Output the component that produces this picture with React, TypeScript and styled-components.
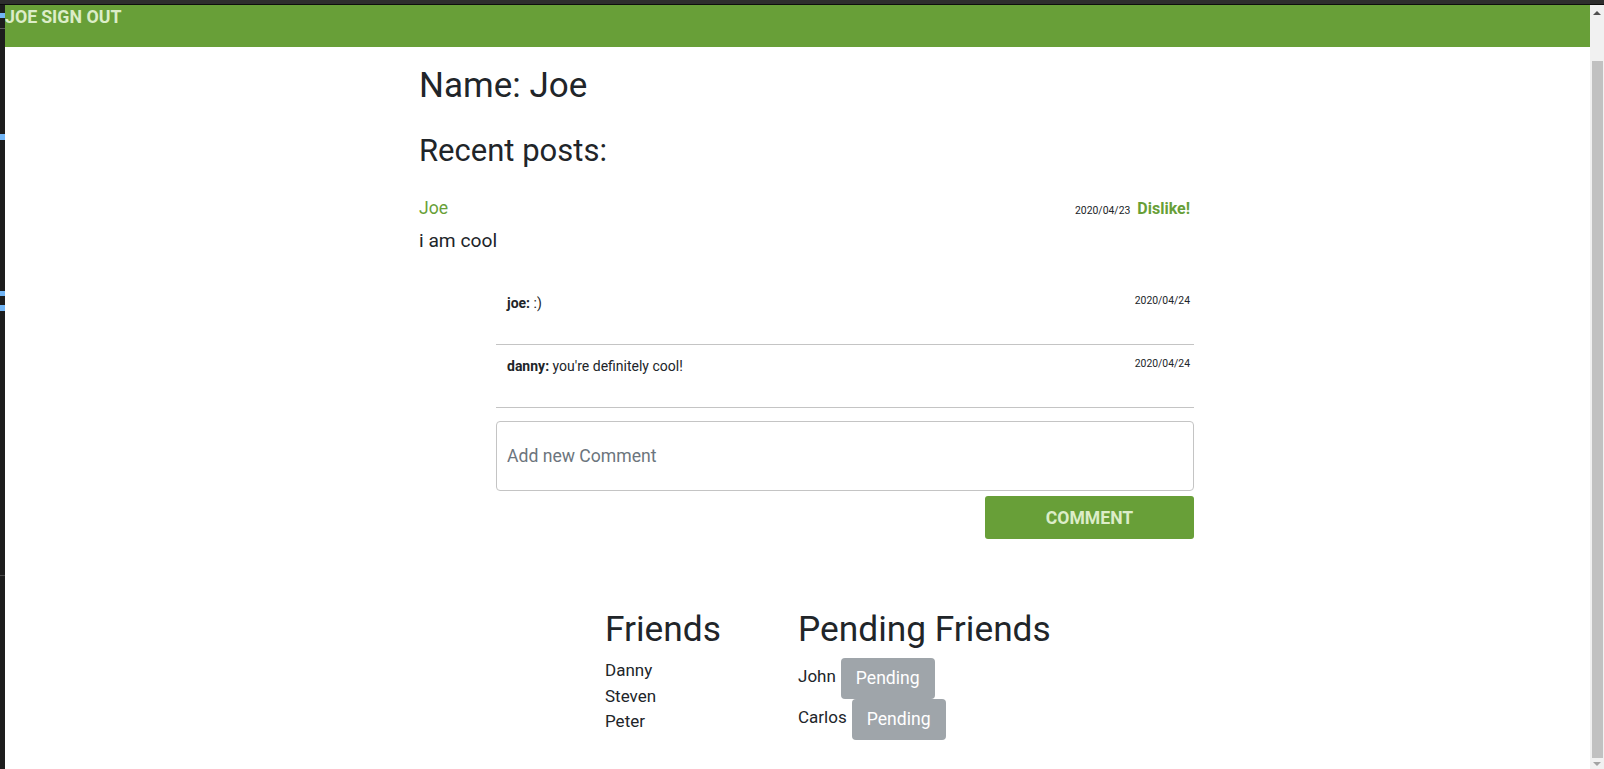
import React from "react";
import styled, { createGlobalStyle } from "styled-components";

const GlobalStyle = createGlobalStyle`
  html, body { margin: 0; padding: 0; height: 100%; overflow: hidden; }
  body { font-family: Roboto, "Noto Sans", Arial, sans-serif; background: #1d1d1d; color: #212529; }
  * { box-sizing: border-box; }
`;

const Frame = styled.div`
  height: 100vh;
  display: flex;
  flex-direction: column;
  overflow: hidden;
`;

const TopStrip = styled.div`
  height: 5px;
  flex-shrink: 0;
  background: #2e2e2e;
  border-bottom: 1px solid #0e0e0e;
`;

const Workspace = styled.div`
  flex: 1;
  display: flex;
  min-height: 0;
`;

const Rail = styled.div`
  width: 5px;
  flex-shrink: 0;
  background: #1d1d1d;
  svg { display: block; }
`;

const Page = styled.div`
  flex: 1;
  min-width: 0;
  background: #ffffff;
  display: flex;
  flex-direction: column;
  overflow: hidden;
`;

const Header = styled.header`
  height: 42px;
  flex-shrink: 0;
  background: #689f38;
  padding-top: 1px;
`;

const NavLink = styled.a`
  color: #dcedc8;
  font-weight: 700;
  font-size: 17.8px;
  line-height: 1.2;
  text-transform: uppercase;
  text-decoration: none;
  cursor: pointer;
`;

const Main = styled.main`
  padding: 17px 0 0 18px;
`;

const Container = styled.div`
  width: 775px;
  margin: 0 auto;
`;

const Title = styled.h1`
  margin: 0;
  font-size: 35px;
  font-weight: 400;
  line-height: 1.25;
`;

const SectionTitle = styled.h2`
  margin: 24px 0 0;
  font-size: 31px;
  font-weight: 400;
  line-height: 1.2;
`;

const Post = styled.article`
  margin-top: 26px;
`;

const PostHead = styled.div`
  display: flex;
  justify-content: space-between;
  align-items: baseline;
`;

const Author = styled.span`
  color: #689f38;
  font-size: 17.6px;
  line-height: 1.5;
`;

const Meta = styled.div`
  display: flex;
  align-items: baseline;
  gap: 7px;
  padding-right: 4px;
`;

const DateText = styled.span`
  font-size: 10.4px;
  line-height: 1.5;
  color: #212529;
`;

const DislikeButton = styled.button`
  background: none;
  border: 0;
  padding: 0;
  font-family: Roboto, Arial, sans-serif;
  font-weight: 700;
  font-size: 16px;
  color: #689f38;
  cursor: pointer;
`;

const PostBody = styled.p`
  margin: 6px 0 0;
  font-size: 19.2px;
  line-height: 1.5;
`;

const Comments = styled.div`
  margin: 26px 0 0 77px;
`;

const CommentCard = styled.div`
  height: 63px;
  padding: 11px 4px 0 11px;
  border-bottom: 1px solid #c4c4c4;
  display: flex;
  justify-content: space-between;
  align-items: flex-start;
  font-size: 14px;
  line-height: 1.5;
`;

const CommentText = styled.span`
  b { font-weight: 700; }
`;

const CommentInput = styled.input`
  display: block;
  margin-top: 13px;
  width: 100%;
  height: 70px;
  border: 1px solid #c4c4c4;
  border-radius: 4px;
  padding: 0 10px;
  font-family: Roboto, Arial, sans-serif;
  font-size: 17.6px;
  color: #495057;
  outline: none;
  &::placeholder { color: #6c757d; }
`;

const CommentButton = styled.button`
  display: block;
  margin: 5px 0 0 auto;
  width: 209px;
  height: 43px;
  background: #689f38;
  color: #dcedc8;
  border: 0;
  border-radius: 3px;
  font-family: Roboto, Arial, sans-serif;
  font-weight: 700;
  font-size: 17.6px;
  text-transform: uppercase;
  cursor: pointer;
`;

const FriendsGrid = styled.section`
  margin-top: 69px;
  display: grid;
  grid-template-columns: 193px auto;
  padding-left: 186px;
`;

const Column = styled.div`
  display: flex;
  flex-direction: column;
`;

const ColumnTitle = styled.h3`
  margin: 0 0 8px;
  font-size: 35.3px;
  font-weight: 400;
  line-height: 1.2;
`;

const FriendName = styled.div`
  font-size: 17px;
  line-height: 1.5;
`;

const PendingRow = styled.div`
  display: flex;
  align-items: flex-start;
  gap: 5px;
  font-size: 17px;
  line-height: 1.5;
`;

const PendingName = styled.span`
  padding-top: 6px;
`;

const PendingButton = styled.button`
  background: #9fa5aa;
  color: #ffffff;
  border: 0;
  border-radius: 4px;
  padding: 7px 15px;
  font-family: Roboto, Arial, sans-serif;
  font-size: 17.6px;
  line-height: 27px;
`;

const Scrollbar = styled.div`
  width: 14px;
  flex-shrink: 0;
  background: #f1f1f1;
  display: flex;
  flex-direction: column;
`;

const ArrowCell = styled.div<{ $h: number; $top: number }>`
  height: ${(p) => p.$h}px;
  padding-top: ${(p) => p.$top}px;
  display: flex;
  justify-content: center;
  align-items: flex-start;
  svg { display: block; }
`;

const Track = styled.div`
  flex: 1;
  display: flex;
  flex-direction: column;
  padding: 42px 1px 0 2px;
`;

const Thumb = styled.div`
  flex: 1;
  background: #c1c1c1;
`;

const comments = [
  { author: "joe", text: ":)", date: "2020/04/24" },
  { author: "danny", text: "you're definitely cool!", date: "2020/04/24" },
];

const friends = ["Danny", "Steven", "Peter"];
const pending = ["John", "Carlos"];

export default function App() {
  return (
    <>
      <GlobalStyle />
      <Frame>
        <TopStrip />
        <Workspace>
          <Rail>
            <svg width="5" height="764" viewBox="0 0 5 764">
              <rect x="0" y="8" width="5" height="5" fill="#72b5f5" />
              <rect x="0" y="23" width="5" height="1" fill="#5a5a5a" />
              <rect x="0" y="129" width="5" height="6" fill="#72b5f5" />
              <rect x="0" y="286" width="5" height="5" fill="#72b5f5" />
              <rect x="0" y="300" width="5" height="6" fill="#72b5f5" />
              <rect x="0" y="570" width="5" height="1" fill="#4a4a4a" />
            </svg>
          </Rail>
          <Page>
            <Header>
              <NavLink>Joe</NavLink> <NavLink>Sign Out</NavLink>
            </Header>
            <Main>
              <Container>
                <Title>Name: Joe</Title>
                <SectionTitle>Recent posts:</SectionTitle>
                <Post>
                  <PostHead>
                    <Author>Joe</Author>
                    <Meta>
                      <DateText>2020/04/23</DateText>
                      <DislikeButton>Dislike!</DislikeButton>
                    </Meta>
                  </PostHead>
                  <PostBody>i am cool</PostBody>
                  <Comments>
                    {comments.map((c) => (
                      <CommentCard key={c.author}>
                        <CommentText>
                          <b>{c.author}:</b> {c.text}
                        </CommentText>
                        <DateText>{c.date}</DateText>
                      </CommentCard>
                    ))}
                    <CommentInput placeholder="Add new Comment" />
                    <CommentButton>Comment</CommentButton>
                  </Comments>
                </Post>
                <FriendsGrid>
                  <Column>
                    <ColumnTitle>Friends</ColumnTitle>
                    {friends.map((f) => (
                      <FriendName key={f}>{f}</FriendName>
                    ))}
                  </Column>
                  <Column>
                    <ColumnTitle>Pending Friends</ColumnTitle>
                    {pending.map((p) => (
                      <PendingRow key={p}>
                        <PendingName>{p}</PendingName>
                        <PendingButton disabled>Pending</PendingButton>
                      </PendingRow>
                    ))}
                  </Column>
                </FriendsGrid>
              </Container>
            </Main>
          </Page>
          <Scrollbar>
            <ArrowCell $h={14} $top={6}>
              <svg width="8" height="4" viewBox="0 0 8 4">
                <polygon points="0,4 8,4 4,0" fill="#505050" />
              </svg>
            </ArrowCell>
            <Track>
              <Thumb />
            </Track>
            <ArrowCell $h={11} $top={4}>
              <svg width="8" height="4" viewBox="0 0 8 4">
                <polygon points="0,0 8,0 4,4" fill="#a3a3a3" />
              </svg>
            </ArrowCell>
          </Scrollbar>
        </Workspace>
      </Frame>
    </>
  );
}
